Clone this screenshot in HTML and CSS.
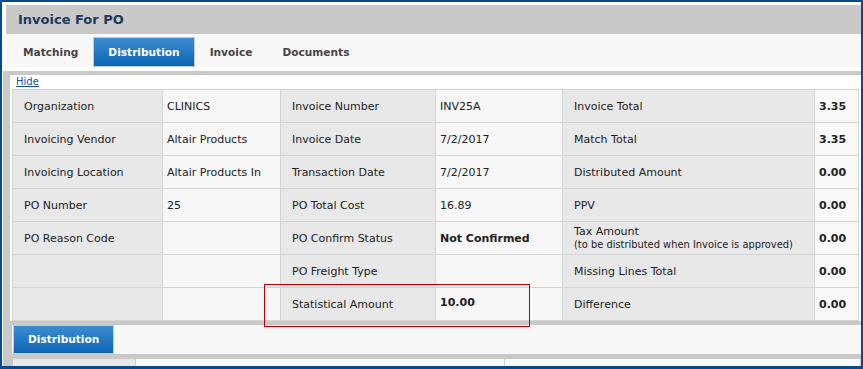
FILE: index.html
```html
<!DOCTYPE html>
<html lang="en">
<head>
    <meta charset="UTF-8">
    <meta name="viewport" content="width=device-width, initial-scale=1.0">
    <title>Invoice For PO</title>
    <link rel="stylesheet" href="styles.css">
</head>
<body>
    <div class="window">
        <!-- Title -->
        <div class="title-bar">Invoice For PO</div>

        <!-- Tabs -->
        <nav class="tabs">
            <a href="#" class="tab">Matching</a>
            <a href="#" class="tab active">Distribution</a>
            <a href="#" class="tab">Invoice</a>
            <a href="#" class="tab">Documents</a>
        </nav>

        <!-- Summary panel -->
        <div class="content">
            <div class="panel">
                <a href="#" class="hide-link">Hide</a>
                <table class="summary">
                    <colgroup>
                        <col style="width: 150px">
                        <col style="width: 118px">
                        <col style="width: 155px">
                        <col style="width: 127px">
                        <col style="width: 252px">
                        <col style="width: 44px">
                    </colgroup>
                    <tr>
                        <td class="label">Organization</td>
                        <td class="value">CLINICS</td>
                        <td class="label">Invoice Number</td>
                        <td class="value">INV25A</td>
                        <td class="label">Invoice Total</td>
                        <td class="value total">3.35</td>
                    </tr>
                    <tr>
                        <td class="label">Invoicing Vendor</td>
                        <td class="value">Altair Products</td>
                        <td class="label">Invoice Date</td>
                        <td class="value">7/2/2017</td>
                        <td class="label">Match Total</td>
                        <td class="value total">3.35</td>
                    </tr>
                    <tr>
                        <td class="label">Invoicing Location</td>
                        <td class="value">Altair Products In</td>
                        <td class="label">Transaction Date</td>
                        <td class="value">7/2/2017</td>
                        <td class="label">Distributed Amount</td>
                        <td class="value total">0.00</td>
                    </tr>
                    <tr>
                        <td class="label">PO Number</td>
                        <td class="value">25</td>
                        <td class="label">PO Total Cost</td>
                        <td class="value">16.89</td>
                        <td class="label">PPV</td>
                        <td class="value total">0.00</td>
                    </tr>
                    <tr>
                        <td class="label">PO Reason Code</td>
                        <td class="value"></td>
                        <td class="label">PO Confirm Status</td>
                        <td class="value strong">Not Confirmed</td>
                        <td class="label">Tax Amount<br><span class="note">(to be distributed when Invoice is approved)</span></td>
                        <td class="value total">0.00</td>
                    </tr>
                    <tr>
                        <td class="label"></td>
                        <td class="value"></td>
                        <td class="label">PO Freight Type</td>
                        <td class="value"></td>
                        <td class="label">Missing Lines Total</td>
                        <td class="value total">0.00</td>
                    </tr>
                    <tr>
                        <td class="label"></td>
                        <td class="value"></td>
                        <td class="label">Statistical Amount</td>
                        <td class="value strong raised">10.00</td>
                        <td class="label">Difference</td>
                        <td class="value total">0.00</td>
                    </tr>
                </table>
            </div>

            <!-- Distribution section -->
            <div class="sub-tabs">
                <span class="tab active">Distribution</span>
            </div>
            <div class="grid-row">
                <div class="grid-cell head"></div>
                <div class="grid-cell mid"></div>
                <div class="grid-cell rest"></div>
            </div>
        </div>

        <!-- Annotation -->
        <div class="highlight"></div>
    </div>
</body>
</html>
```
FILE: styles.css
```css
* {
    margin: 0;
    padding: 0;
    box-sizing: border-box;
}

body {
    font-family: 'DejaVu Sans', Verdana, sans-serif;
    font-size: 11px;
    color: #222;
    background: #fff;
}

.window {
    position: relative;
    width: 863px;
    height: 369px;
    border: 2px solid #0b4a8a;
    border-bottom-width: 3px;
    background-color: #fff;
    padding: 3px 0 0 1px;
    overflow: hidden;
}

.title-bar {
    margin-left: 3px;
    height: 29px;
    line-height: 30px;
    padding-left: 12px;
    background-color: #c8c9c8;
    color: #1d3a5f;
    font-size: 13px;
    font-weight: bold;
}

.tabs {
    display: flex;
    align-items: flex-end;
    margin-left: 3px;
    height: 33px;
    padding-left: 2px;
    background-color: #f8f8f8;
}

.tab {
    display: block;
    height: 30px;
    line-height: 28px;
    padding: 0 14px;
    border: 1px solid transparent;
    color: #4a4242;
    font-size: 10.6px;
    font-weight: bold;
    text-decoration: none;
}

.tab.active {
    color: #fff;
    border-color: #c4ccd4;
    background: linear-gradient(#3d8cd2, #0c65b2);
}

.content {
    margin-top: 4px;
    padding: 4px 0 0 7px;
    background-color: #c8c9c8;
}

.panel {
    background-color: #fff;
    padding: 0 1px 0 2px;
}

.hide-link {
    display: block;
    height: 14px;
    line-height: 14px;
    margin-left: 4px;
    width: max-content;
    color: #1a4fa8;
    font-size: 10px;
}

.summary {
    border-collapse: collapse;
    table-layout: fixed;
    width: 846px;
    border: 1px solid #d4d4d4;
}

.summary td {
    height: 33px;
    border: 1px solid #d4d4d4;
    vertical-align: middle;
    white-space: nowrap;
    line-height: 13px;
}

.summary .label {
    background-color: #e8e8e8;
    padding-left: 11px;
}

.summary .value {
    background-color: #f7f7f7;
    padding-left: 4px;
}

.summary .total {
    background-color: #f9f9f9;
    font-weight: bold;
}

.summary .strong {
    font-weight: bold;
}

.summary .raised {
    padding-bottom: 4px;
}

.summary .note {
    font-size: 9.9px;
    line-height: 13px;
}

.sub-tabs {
    display: flex;
    margin: 4px 0 0 2px;
    height: 29px;
    padding-left: 1px;
    background-color: #f8f8f8;
}

.sub-tabs .tab {
    height: 29px;
    line-height: 27px;
    padding: 0 14px;
}

.grid-row {
    display: flex;
    margin: 5px 0 0 3px;
    height: 12px;
}

.grid-cell {
    border-right: 1px solid #d4d4d4;
}

.grid-cell.head {
    width: 123px;
    background-color: #e8e8e8;
}

.grid-cell.mid {
    width: 369px;
    background-color: #f8f8f8;
}

.grid-cell.rest {
    flex: 1;
    background-color: #fbfbfb;
}

.highlight {
    position: absolute;
    left: 262px;
    top: 282px;
    width: 266px;
    height: 43px;
    border: 1px solid #c00000;
}
```
